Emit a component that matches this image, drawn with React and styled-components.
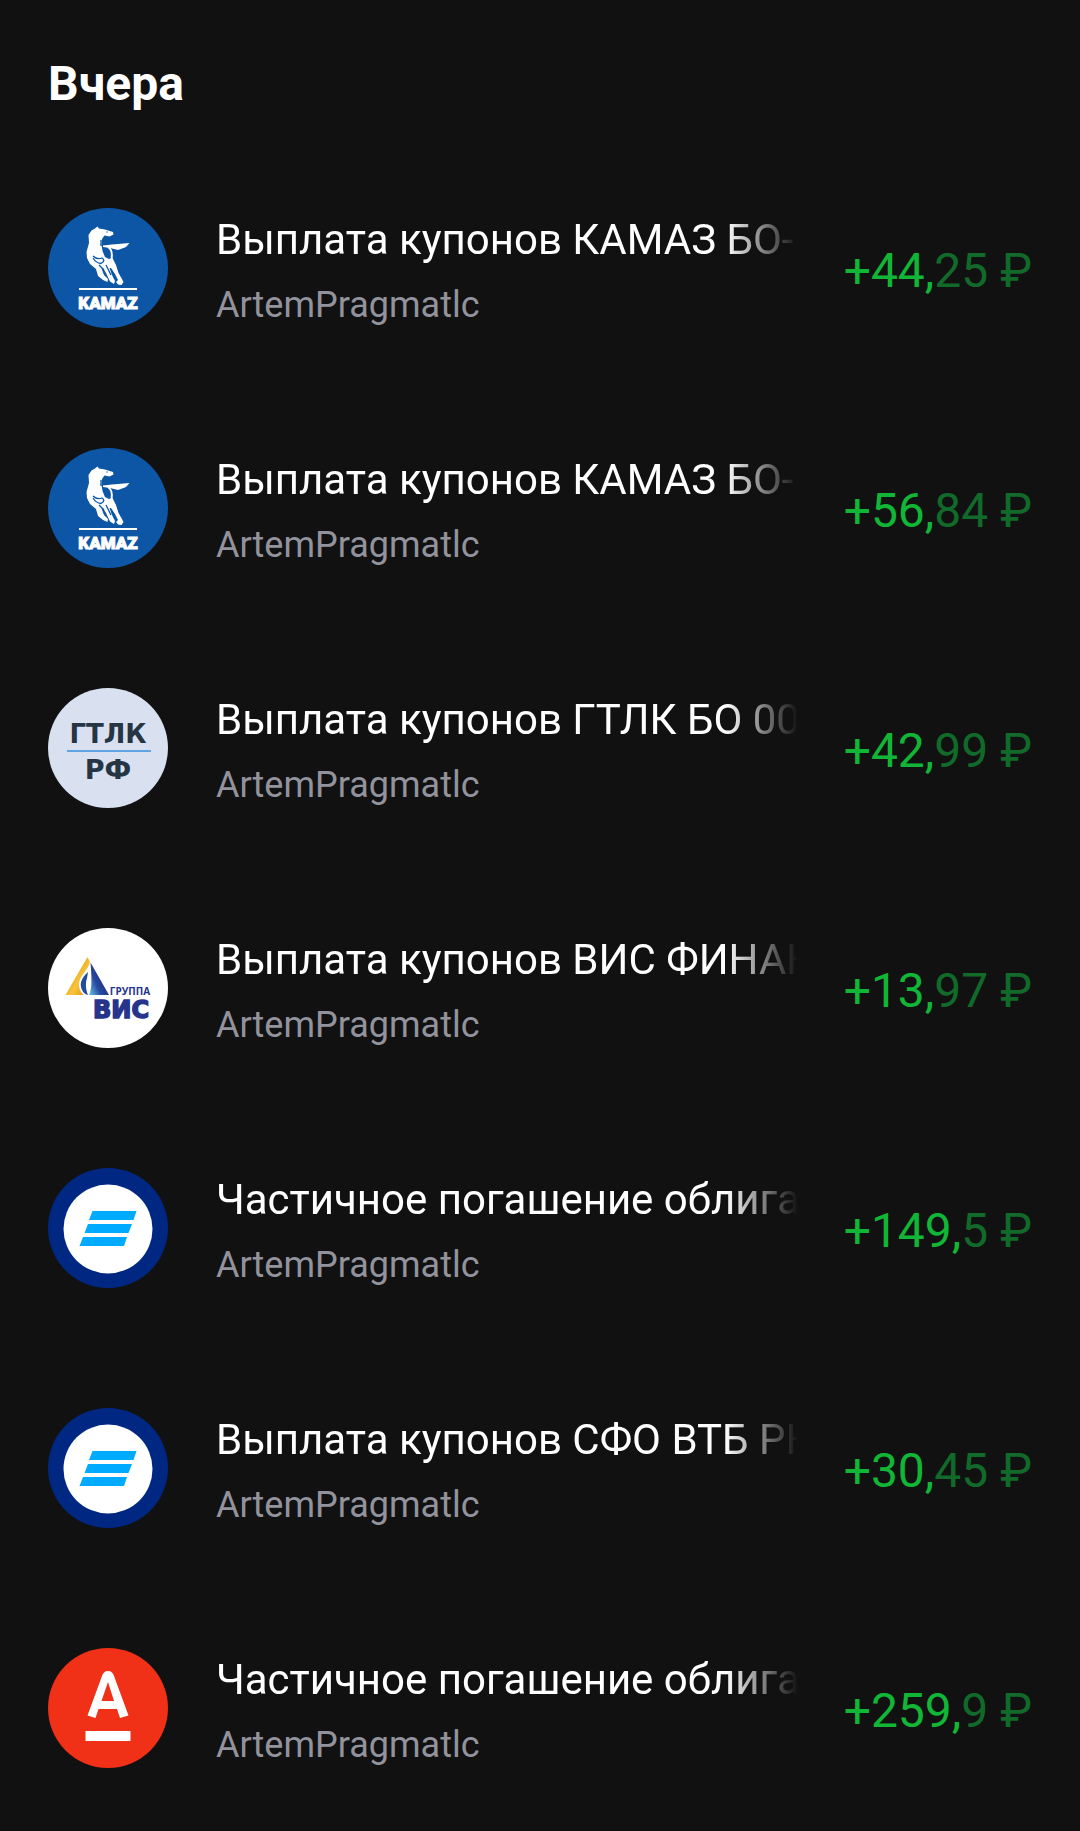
import styled, { createGlobalStyle } from 'styled-components';

const KamazLogo = () => (
  <Logo viewBox="0 0 120 120" role="img" aria-label="КАМАЗ">
    <rect width="120" height="120" fill="#0d55a5" />
    {/* horse body and legs */}
    <path
      d="M47 20.5 L49.500 18.500 L51 20.5 L57 21.5 L65 24 L65.500 26.500 L61.500 28.500 L56.500 27.500 L54 31 L53.500 37 L54.500 43 L57 49 L61 51 L64.500 50 L68 57 L70.500 65 L74 71 L75.500 74 L73.500 77 L70 76.500 L68 74 L70 72 L67 66 L63 60 L61.500 60 L64 67 L67 73 L66 76 L62 73.500 L58 65 L55 60 L53.500 60.500 L56 67 L60 71 L59.500 74 L55 72 L50 68 L48 61 L42 56 L39 50 L38.500 44 L41 35 L40.500 27 L43.500 22.500 Z"
      fill="#fff"
    />
    {/* tail */}
    <path d="M55 37.5 L64 36.500 L81.500 35 L78 39 L70 42 L62 40 L55 39 Z" fill="#fff" />
    <path d="M60 39 Q65 42 63.500 51" fill="none" stroke="#fff" strokeWidth="2" />
    <path
      d="M53 32 V38 M45 48 Q49 52 54 50 Q58 53 53 55.500 Q48 55 45 50 M51 57 L56 62 M58 57 L63 67"
      fill="none"
      stroke="#0d55a5"
      strokeWidth="1.3"
    />
    <circle cx="59" cy="24" r="0.7" fill="#0d55a5" />
    <rect x="31" y="80" width="58" height="2" fill="#fff" />
    <LogoText x="60" y="101" fill="#fff" stroke="#fff" strokeWidth="1" $size={17} $weight={900} $family="Roboto">
      KAMAZ
    </LogoText>
  </Logo>
);

const GtlkLogo = () => (
  <Logo viewBox="0 0 120 120" role="img" aria-label="ГТЛК РФ">
    <rect width="120" height="120" fill="#d9e1f1" />
    <LogoText x="60" y="55" fill="#263544" $size={26} $family="DejaVu Sans">ГТЛК</LogoText>
    <rect x="19" y="62" width="84" height="2" fill="#5fa3e2" />
    <LogoText x="60" y="91" fill="#263544" $size={27} $family="DejaVu Sans">РФ</LogoText>
  </Logo>
);

const VisLogo = () => (
  <Logo viewBox="0 0 120 120" role="img" aria-label="Группа ВИС">
    <defs>
      <linearGradient id="visGold" x1="0" y1="0" x2="1" y2="1">
        <stop offset="0.2" stopColor="#d9971c" />
        <stop offset="0.6" stopColor="#f8c53a" />
        <stop offset="1" stopColor="#d58a12" />
      </linearGradient>
      <linearGradient id="visBlue" x1="0" y1="1" x2="0.8" y2="0.4">
        <stop offset="0" stopColor="#6cc5ea" />
        <stop offset="0.5" stopColor="#26489f" />
        <stop offset="1" stopColor="#20307f" />
      </linearGradient>
    </defs>
    <rect width="120" height="120" fill="#fff" />
    <path d="M39.500 29 L42 34 C40 43 31 47 31 57 C31 61 33 65 36 67 L17.500 67 Z" fill="url(#visGold)" />
    <path d="M42.500 34.500 L61 67 L41 67 C44.500 60 43.500 48 42.500 34.500 Z" fill="url(#visBlue)" />
    <path d="M40 44 C35 49 32 53 33 59 C34 63 36 66 40 67 C38 62 37 56 39 50 Z" fill="#214b9c" />
    <LogoText x="82" y="67" fill="#26358b" $size={10} $family="Open Sans">ГРУППА</LogoText>
    <LogoText x="73" y="90" fill="#26358b" stroke="#26358b" strokeWidth="1.5" $size={24} $family="DejaVu Sans">
      ВИС
    </LogoText>
  </Logo>
);

const VtbLogo = () => (
  <Logo viewBox="0 0 120 120" role="img" aria-label="ВТБ">
    <rect width="120" height="120" fill="#002882" />
    <circle cx="60" cy="61" r="44.5" fill="#fff" />
    <path
      d="M44.500 43 H88.500 L85.500 52 H41 Z M40 56 H84 L80.500 65 H36.500 Z M35 69 H79 L76 78 H31.500 Z"
      fill="#00aaff"
    />
  </Logo>
);

const AlfaLogo = () => (
  <Logo viewBox="0 0 120 120" role="img" aria-label="Альфа-Банк">
    <rect width="120" height="120" fill="#f03118" />
    <path
      d="M60 23 C56.500 23 55 25 54 28 L39.500 67.500 L47.500 70 L50.500 61 H69 L72 70 L80.500 67.500 L66 28 C65 25 63.500 23 60 23 Z M60 34 L66 53 H53.500 Z"
      fill="#fff"
      fillRule="evenodd"
    />
    <rect x="37.5" y="83" width="45" height="10" fill="#fff" />
  </Logo>
);

const operations = [
  { id: 1, logo: KamazLogo, title: 'Выплата купонов КАМАЗ БО-П13', whole: '+44,', rest: '25 ₽' },
  { id: 2, logo: KamazLogo, title: 'Выплата купонов КАМАЗ БО-П14', whole: '+56,', rest: '84 ₽' },
  { id: 3, logo: GtlkLogo, title: 'Выплата купонов ГТЛК БО 002Р', whole: '+42,', rest: '99 ₽' },
  { id: 4, logo: VisLogo, title: 'Выплата купонов ВИС ФИНАНС', whole: '+13,', rest: '97 ₽' },
  { id: 5, logo: VtbLogo, title: 'Частичное погашение облигаций', whole: '+149,', rest: '5 ₽' },
  { id: 6, logo: VtbLogo, title: 'Выплата купонов СФО ВТБ РКС', whole: '+30,', rest: '45 ₽' },
  { id: 7, logo: AlfaLogo, title: 'Частичное погашение облигаций', whole: '+259,', rest: '9 ₽' },
];

const App = () => {
  return (
    <>
      <GlobalStyle />
      <Page>
        <DayTitle>Вчера</DayTitle>
        <OperationList>
          {operations.map(({ id, logo: OperationLogo, title, whole, rest }) => (
            <Operation key={id}>
              <OperationLogo />
              <Info>
                <Title>{title}</Title>
                <Account>ArtemPragmatlc</Account>
              </Info>
              <Amount>
                {whole}
                <Fraction>{rest}</Fraction>
              </Amount>
            </Operation>
          ))}
        </OperationList>
      </Page>
    </>
  );
};

export default App;

/* ============== styles ============== */

const GlobalStyle = createGlobalStyle`
  * {
    box-sizing: border-box;
  }

  body {
    margin: 0;
    background: #111111;
    color: #fff;
    font-family: Roboto, "Liberation Sans", sans-serif;
  }
`;

const Page = styled.main`
  min-height: 100vh;
  padding: 52px 48px 0;
`;

const DayTitle = styled.h1`
  margin: 0 0 32px;
  font-size: 48px;
  line-height: 64px;
  font-weight: 700;
`;

const OperationList = styled.ul`
  list-style: none;
  margin: 0;
  padding: 0;
`;

const Operation = styled.li`
  display: flex;
  align-items: flex-start;
  padding: 60px 0 50px;
`;

const Logo = styled.svg`
  flex: none;
  width: 120px;
  height: 120px;
  margin-right: 48px;
  border-radius: 50%;
`;

const LogoText = styled.text`
  font-family: ${({ $family }) => `"${$family}"`}, sans-serif;
  font-size: ${({ $size }) => $size}px;
  font-weight: ${({ $weight = 700 }) => $weight};
  text-anchor: middle;
`;

const Info = styled.div`
  flex: 1;
  min-width: 0;
`;

const Title = styled.div`
  overflow: hidden;
  font-size: 42px;
  line-height: 64px;
  white-space: nowrap;
  mask-image: linear-gradient(to right, #000 calc(100% - 72px), transparent);
`;

const Account = styled.div`
  color: #92939c;
  font-size: 36px;
  line-height: 66px;
`;

const Amount = styled.div`
  flex: none;
  width: 234px;
  color: #12b636;
  font-size: 48px;
  line-height: 126px;
  text-align: right;
  white-space: nowrap;
`;

const Fraction = styled.span`
  color: #126a2a;
`;
